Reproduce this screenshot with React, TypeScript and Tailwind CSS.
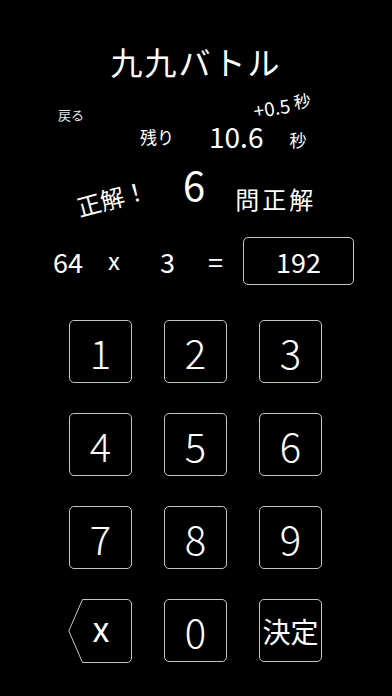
import React, { useState } from "react";

const keys = ["1", "2", "3", "4", "5", "6", "7", "8", "9"];

function Key({ label, onClick }: { label: string; onClick?: () => void }) {
  return (
    <button
      className="w-[63px] h-[63px] rounded-[5px] border border-[#c4c4c4] flex items-center justify-center text-[40px] leading-none font-light"
      onClick={onClick}
    >
      {label}
    </button>
  );
}

function BackKey({ onClick }: { onClick?: () => void }) {
  return (
    <button className="relative w-[64px] h-[64px] -ml-[1px] flex items-center justify-center" onClick={onClick}>
      <svg className="absolute inset-0" width="64" height="64" viewBox="0 0 64 64" fill="none">
        <path
          d="M14.5 0.5 H59 a4.5 4.5 0 0 1 4.5 4.5 V59 a4.5 4.5 0 0 1 -4.5 4.5 H14.5 L0.8 32 Z"
          stroke="#c4c4c4"
          strokeWidth="1"
          strokeLinejoin="round"
        />
      </svg>
      <span className="relative text-[34px] leading-none pb-[6px] ml-[2px]">x</span>
    </button>
  );
}

export default function App() {
  const [answer, setAnswer] = useState("192");

  return (
    <div
      className="w-[392px] h-[696px] bg-black text-white overflow-hidden select-none"
      style={{ fontFamily: '"Noto Sans CJK JP", "Noto Sans", sans-serif' }}
    >
      {/* Title */}
      <h1 className="pt-[45px] text-center text-[32px] leading-none tracking-[2px]">九九バトル</h1>

      {/* Timer row */}
      <div className="relative flex items-start h-[83px]">
        <span className="ml-[58px] mt-[31px] text-[13px] leading-none text-[#e5e5e5]">戻る</span>
        <span className="ml-[56px] mt-[51px] text-[17px] leading-none">残り</span>
        <span className="ml-[35px] mt-[45px] text-[28px] leading-none">10.6</span>
        <span className="ml-[26px] mt-[54px] text-[17px] leading-none">秒</span>
        <div className="absolute left-[253px] top-[18px] flex items-end gap-[4px] -rotate-[9deg]">
          <span className="text-[19px] leading-none">+0.5</span>
          <span className="text-[17px] leading-none pb-[3px]">秒</span>
        </div>
      </div>

      {/* Score row */}
      <div className="flex items-start h-[76px]">
        <span className="ml-[76px] mt-[26px] text-[24px] leading-none -rotate-[15deg]">正解！</span>
        <span className="ml-[35px] mt-[4px] text-[40px] leading-none">6</span>
        <span className="ml-[30px] mt-[27px] text-[24px] leading-none tracking-[3px]">問正解</span>
      </div>

      {/* Equation */}
      <div className="flex items-center h-[50px] text-[27px] leading-none">
        <span className="ml-[53px] w-[28px]">64</span>
        <span className="ml-[27px] text-[24px] pb-[3px]">x</span>
        <span className="ml-[40px]">3</span>
        <span className="ml-[33px]">=</span>
        <div className="ml-[20px] w-[111px] h-[48px] rounded-[5px] border border-[#c4c4c4] flex items-center justify-center">
          {answer}
        </div>
      </div>

      {/* Keypad */}
      <div className="mt-[34px] ml-[69px] grid grid-cols-[63px_63px_63px] gap-x-[32px] gap-y-[30px]">
        {keys.map((k) => (
          <Key key={k} label={k} onClick={() => setAnswer((a) => (a + k).slice(0, 4))} />
        ))}
        <BackKey onClick={() => setAnswer((a) => a.slice(0, -1))} />
        <Key label="0" onClick={() => setAnswer((a) => (a + "0").slice(0, 4))} />
        <button className="w-[63px] h-[63px] rounded-[5px] border border-[#c4c4c4] flex items-center justify-center text-[28px] leading-none">
          決定
        </button>
      </div>
    </div>
  );
}
